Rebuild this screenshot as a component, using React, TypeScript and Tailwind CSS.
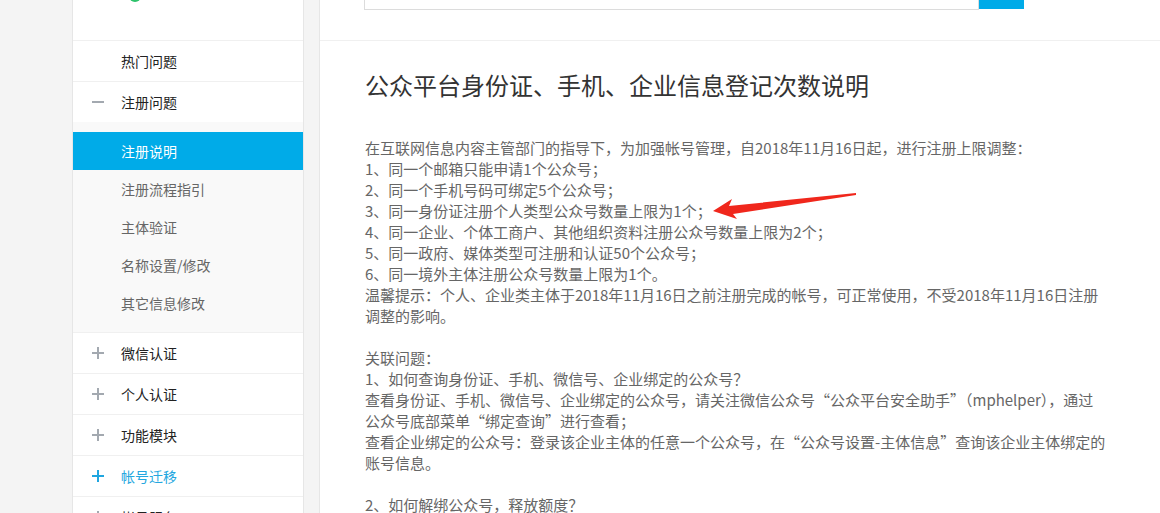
import React from "react";

type NavItem = {
  label: string;
  icon?: "plus" | "minus";
  highlight?: boolean;
};

const subItems = ["注册说明", "注册流程指引", "主体验证", "名称设置/修改", "其它信息修改"];

const lowerItems: NavItem[] = [
  { label: "微信认证", icon: "plus" },
  { label: "个人认证", icon: "plus" },
  { label: "功能模块", icon: "plus" },
  { label: "帐号迁移", icon: "plus", highlight: true },
  { label: "帐号服务", icon: "plus" },
];

const bodyLines = [
  "在互联网信息内容主管部门的指导下，为加强帐号管理，自2018年11月16日起，进行注册上限调整：",
  "1、同一个邮箱只能申请1个公众号；",
  "2、同一个手机号码可绑定5个公众号；",
  "3、同一身份证注册个人类型公众号数量上限为1个；",
  "4、同一企业、个体工商户、其他组织资料注册公众号数量上限为2个；",
  "5、同一政府、媒体类型可注册和认证50个公众号；",
  "6、同一境外主体注册公众号数量上限为1个。",
  "温馨提示：个人、企业类主体于2018年11月16日之前注册完成的帐号，可正常使用，不受2018年11月16日注册",
  "调整的影响。",
  "",
  "关联问题：",
  "1、如何查询身份证、手机、微信号、企业绑定的公众号？",
  "查看身份证、手机、微信号、企业绑定的公众号，请关注微信公众号“公众平台安全助手”（mphelper），通过",
  "公众号底部菜单“绑定查询”进行查看；",
  "查看企业绑定的公众号：登录该企业主体的任意一个公众号，在“公众号设置-主体信息”查询该企业主体绑定的",
  "账号信息。",
  "",
  "2、如何解绑公众号，释放额度？",
];

function ToggleIcon({ kind, blue }: { kind: "plus" | "minus"; blue?: boolean }) {
  const color = blue ? "bg-[#1fa6e0]" : "bg-[#a3a9b0]";
  return (
    <span className="relative h-[12px] w-[12px] shrink-0">
      <span className={`absolute left-0 top-[5px] h-[2px] w-[12px] ${color}`} />
      {kind === "plus" && <span className={`absolute left-[5px] top-0 h-[12px] w-[2px] ${color}`} />}
    </span>
  );
}

function NavRow({ item }: { item: NavItem }) {
  return (
    <div className="flex h-[41px] items-center border-b border-[#f0f0f0]">
      <span className="flex w-[48px] justify-start pl-[19px]">
        {item.icon && <ToggleIcon kind={item.icon} blue={item.highlight} />}
      </span>
      <span className={item.highlight ? "text-[#25a7e0]" : "text-[#222]"}>{item.label}</span>
    </div>
  );
}

function Sidebar() {
  return (
    <aside className="w-[232px] shrink-0 border-x border-[#e6e6e6] bg-white text-[14px]">
      <div className="relative h-[41px] border-b border-[#f0f0f0]">
        <span className="absolute left-[56px] top-[-10px] h-[12px] w-[12px] rounded-full bg-[#2dc26b]" />
      </div>
      <NavRow item={{ label: "热门问题" }} />
      <div className="flex h-[40px] items-center">
        <span className="flex w-[48px] pl-[19px]">
          <ToggleIcon kind="minus" />
        </span>
        <span className="text-[#222]">注册问题</span>
      </div>
      <div className="border-b border-[#f0f0f0] bg-[#f9f9f9] py-[10px]">
        {subItems.map((label, i) => (
          <div
            key={label}
            className={`flex h-[38px] items-center pl-[48px] ${
              i === 0 ? "bg-[#00abe8] text-white" : "text-[#666]"
            }`}
          >
            {label}
          </div>
        ))}
      </div>
      {lowerItems.map((item) => (
        <NavRow key={item.label} item={item} />
      ))}
    </aside>
  );
}

function Arrow() {
  return (
    <svg
      className="pointer-events-none absolute left-[700px] top-[185px]"
      width="170"
      height="45"
      viewBox="0 0 170 45"
    >
      <polygon points="13,26 32,14 29,21 156,8 156,10 33,29 37,34" fill="#f0271c" />
    </svg>
  );
}

export default function App() {
  return (
    <div
      className="relative flex h-[513px] w-full overflow-hidden bg-[#f4f4f4]"
      style={{ fontFamily: '"Noto Sans CJK SC", "Noto Sans", sans-serif' }}
    >
      <div className="w-[72px] shrink-0" />
      <Sidebar />
      <main className="ml-[15px] min-w-0 flex-1 border-l border-[#e6e6e6] bg-white">
        <div className="flex h-[41px] items-start border-b border-[#f0f0f0] px-[44px]">
          <div className="mt-[-26px] flex h-[36px] w-[660px]">
            <div className="flex-1 border border-[#dcdcdc] bg-white" />
            <button className="h-[35px] w-[45px] bg-[#00abe8]" aria-label="搜索" />
          </div>
        </div>
        <div className="px-[45px]">
          <h1 className="mt-[26px] text-[24px] leading-[36px] font-normal text-[#333]">
            公众平台身份证、手机、企业信息登记次数说明
          </h1>
          <div className="mt-[34px] text-[15px] leading-[21px] text-[#666]">
            {bodyLines.map((line, i) => (
              <p key={i} className="h-[21px] whitespace-nowrap">
                {line}
              </p>
            ))}
          </div>
        </div>
      </main>
      <Arrow />
    </div>
  );
}
